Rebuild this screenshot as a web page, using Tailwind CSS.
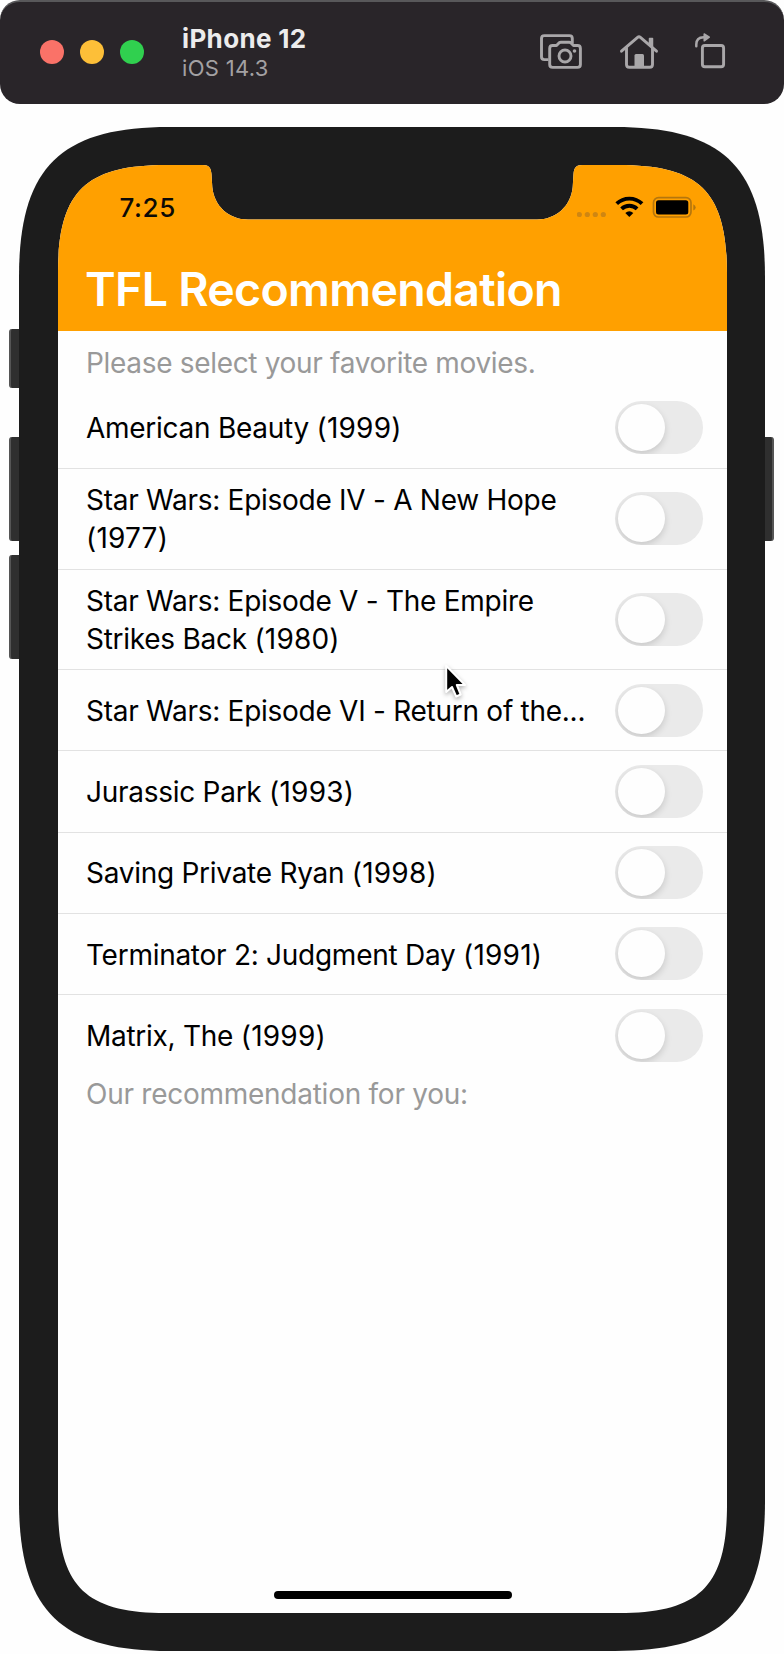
<!DOCTYPE html>
<html lang="en">
<head>
<meta charset="utf-8">
<title>iPhone 12 – iOS 14.3</title>
<script src="https://cdn.jsdelivr.net/npm/@tailwindcss/browser@4"></script>
</head>
<body class="relative h-[1654px] w-[784px] overflow-hidden bg-[#fefefe] font-[Inter,'Liberation_Sans',sans-serif]">

<!-- Simulator window bar -->
<header class="flex h-[104px] items-center rounded-[20px] border-t-2 border-[#58585a] bg-[#292529] pr-[58px] pb-[2px] pl-10">
  <div class="flex gap-4">
    <span class="size-6 rounded-full bg-[#fa7268]"></span>
    <span class="size-6 rounded-full bg-[#fdbf38]"></span>
    <span class="size-6 rounded-full bg-[#30d04f]"></span>
  </div>
  <div class="ml-[38px] flex flex-1 flex-col pt-px">
    <h1 class="text-[26px] leading-[30px] font-bold tracking-[0.35px] whitespace-nowrap text-[#ececec]">iPhone 12</h1>
    <p class="text-[22px] leading-[28px] tracking-[0.3px] whitespace-nowrap text-[#a3a1a3]">iOS 14.3</p>
  </div>
  <div class="flex items-center gap-[34px] pt-px">
    <svg class="h-10 w-12" viewBox="537 33 48 40" fill="none" stroke="#a9a7a9" stroke-width="2.9" stroke-linejoin="round">
      <path d="M572.3 43.500V38.500Q572.300 35.600 569.400 35.600H544.400Q541.500 35.600 541.500 38.500V56.700Q541.500 59.600 544.400 59.600H548.500"/>
      <path d="M552.600 45.500H556.500L559 42.900Q559.800 42.200 561 42.200H569Q570.200 42.200 571 42.900L573.500 45.500H577.500Q580.400 45.500 580.400 48.400V64.500Q580.400 67.400 577.500 67.400H552.600Q549.700 67.400 549.700 64.500V48.400Q549.700 45.500 552.600 45.500Z"/>
      <circle cx="565" cy="56" r="6"/>
      <circle cx="574.500" cy="51" r="1.800" fill="#a9a7a9" stroke="none"/>
    </svg>
    <svg class="mr-px h-10 w-10" viewBox="619 33 40 40" fill="none" stroke="#a9a7a9" stroke-width="2.900" stroke-linecap="round" stroke-linejoin="round">
      <path d="M621.500 51.200L637.600 37.300Q639 36.100 640.400 37.300L656.500 51.200"/>
      <path d="M626.500 48V64.500Q626.500 67.300 629.300 67.300H649.700Q652.500 67.300 652.500 64.500V48"/>
      <path d="M649.500 38.500H652.500V46L649.500 43.500Z" fill="#a9a7a9" stroke-width="1.500"/>
      <path d="M634.500 67.500V55.500Q634.500 54 636 54H642.500Q644 54 644 55.500V67.500Z" fill="#a9a7a9" stroke="none"/>
    </svg>
    <svg class="h-10 w-8" viewBox="694 33 32 40" fill="none" stroke="#a9a7a9" stroke-width="2.900" stroke-linejoin="round">
      <rect x="702.400" y="45.500" width="21.200" height="21.200" rx="2.500"/>
      <path d="M696.300 46.300V44.500Q696.300 37.200 703.600 37.200H705" stroke-width="2.500" stroke-linecap="round"/>
      <path d="M704.200 34L709.300 37.200L704.200 40.800Z" fill="#a9a7a9" stroke-width="1.500"/>
    </svg>
  </div>
</header>

<!-- Device: side buttons, frame, screen -->
<main class="mt-[23px] flex">
  <div class="flex w-[19px] flex-col items-end pt-[202px]">
    <span class="h-[59px] w-[10px] rounded-l-[3px] border-l-2 border-[#555] bg-[#2f2f2f]"></span>
    <span class="mt-[49px] h-[104px] w-[10px] rounded-l-[3px] border-l-2 border-[#555] bg-[#2f2f2f]"></span>
    <span class="mt-[14px] h-[104px] w-[10px] rounded-l-[3px] border-l-2 border-[#555] bg-[#2f2f2f]"></span>
  </div>

  <div class="h-[1524px] w-[746px] bg-[#1c1c1c] pt-[38px] pl-[39px] [clip-path:path('M0_150C0_41_41_0_150_0H596C705_0_746_41_746_150V1374C746_1483_705_1524_596_1524H150C41_1524_0_1483_0_1374Z')]">
    <div class="flex h-[1448px] w-[669px] flex-col bg-[#fefefe] [clip-path:path('M0_108C0_27_27_0_108_0H145C151_0_153_3_153.500_9L154.300_22C156_41_171_54.500_190_54.500H479C498_54.500_513_41_514.700_22L515.500_9C516_3_518_0_524_0H561C642_0_669_27_669_108V1340C669_1421_642_1448_561_1448H108C27_1448_0_1421_0_1340Z')]">

      <div class="h-[166px] shrink-0 bg-[#ffa000]">
        <div class="flex h-[86px] items-center justify-between pr-[30px] pl-[61.5px]">
          <time class="text-[26px] leading-8 font-medium tracking-[0.6px] text-[#0c0a06]">7:25</time>
          <svg class="h-6 w-[120px]" viewBox="577 196 120 24" fill="none">
            <g fill="#cf8612">
              <circle cx="579.300" cy="214.500" r="2.600"/><circle cx="587.300" cy="214.500" r="2.600"/><circle cx="595.300" cy="214.500" r="2.600"/><circle cx="603.300" cy="214.500" r="2.600"/>
            </g>
            <g stroke="#000" stroke-width="3.900">
              <path d="M616.700 203.700A18.300 18.300 0 0 1 642 203.700"/>
              <path d="M621.600 208.900A11.200 11.200 0 0 1 637.100 208.900"/>
            </g>
            <path d="M629.300 217L625.300 213A6.200 6.200 0 0 1 633.300 213Z" fill="#000"/>
            <rect x="653.500" y="197.700" width="37.500" height="19.300" rx="5" stroke="#b5760d" stroke-width="1.700"/>
            <rect x="656" y="200.200" width="32.300" height="14.200" rx="2.500" fill="#000"/>
            <path d="M693.300 204.300Q695.700 205.500 695.700 207.400Q695.700 209.300 693.300 210.500Z" fill="#b5760d"/>
          </svg>
        </div>
        <h2 class="pt-[6px] pl-[27px] text-[46.500px] leading-[64px] font-semibold tracking-[-0.7px] whitespace-nowrap text-white">TFL Recommendation</h2>
      </div>

      <p class="h-[57px] pt-[13px] pl-7 text-[28px] leading-[38px] tracking-[-0.32px] whitespace-nowrap text-[#999]">Please select your favorite movies.</p>

      <ul id="movies" class="text-[28px] leading-[38px] tracking-[-0.27px] whitespace-pre text-black"></ul>

      <p class="-mt-px pl-7 text-[28px] leading-[38px] tracking-[-0.26px] whitespace-nowrap text-[#999]">Our recommendation for you:</p>

      <div class="mx-auto mt-auto mb-[14px] h-[8px] w-[238px] rounded-full bg-black"></div>
    </div>
  </div>

  <div class="pt-[310px]">
    <span class="block h-[104px] w-[9px] rounded-r-[3px] border-r-2 border-[#555] bg-[#2f2f2f]"></span>
  </div>
</main>

<!-- Mouse pointer -->
<svg class="absolute top-[661px] left-[440px] h-[44px] w-[30px] drop-shadow-[0_2px_2px_rgba(0,0,0,0.3)]" viewBox="440 660 30 44">
  <path d="M446.200 664.800V691L452 686L456.200 695.500L460.700 693.500L456.800 684H465Z" fill="#000" stroke="#fff" stroke-width="2" stroke-linejoin="round"/>
</svg>

<template id="row">
  <li class="flex items-center justify-between border-[#e2e2e2] pr-6 pl-7">
    <div></div>
    <button type="button" role="switch" aria-checked="false" class="flex h-[53px] w-[88px] overflow-hidden rounded-full bg-[#eaeaea] p-[3px]">
      <span class="size-[47px] rounded-full bg-[#fefefe] shadow-[0px_3px_7px_rgba(0,0,0,0.15)]"></span>
    </button>
  </li>
</template>
<script>
  const movies = [
    [['American Beauty (1999)'], 81],
    [['Star Wars: Episode IV - A New Hope', '(1977)'], 101],
    [['Star Wars: Episode V - The Empire', 'Strikes Back (1980)'], 100],
    [['Star Wars: Episode VI - Return of the...'], 81],
    [['Jurassic Park (1993)'], 82],
    [['Saving Private Ryan (1998)'], 81],
    [['Terminator 2: Judgment Day (1991)'], 81],
    [['Matrix, The (1999)'], 81],
  ];
  const list = document.getElementById('movies');
  movies.forEach(([lines, height], i) => {
    const li = document.getElementById('row').content.firstElementChild.cloneNode(true);
    li.style.height = height + 'px';
    if (i < movies.length - 1) li.classList.add('border-b');
    if (i !== 3) li.lastElementChild.classList.add('mb-px');
    const label = li.firstElementChild;
    if (i > 1 && i !== 5) label.className = 'pt-px';
    for (const line of lines) {
      const p = document.createElement('p');
      const [, name, year] = line.match(/^(.*?)(\(\d+\))?$/);
      p.append(name);
      if (year) {
        const span = document.createElement('span');
        span.className = 'tracking-[0.2px]';
        span.textContent = year;
        p.append(span);
      }
      label.append(p);
    }
    list.append(li);
  });
</script>
</body>
</html>
